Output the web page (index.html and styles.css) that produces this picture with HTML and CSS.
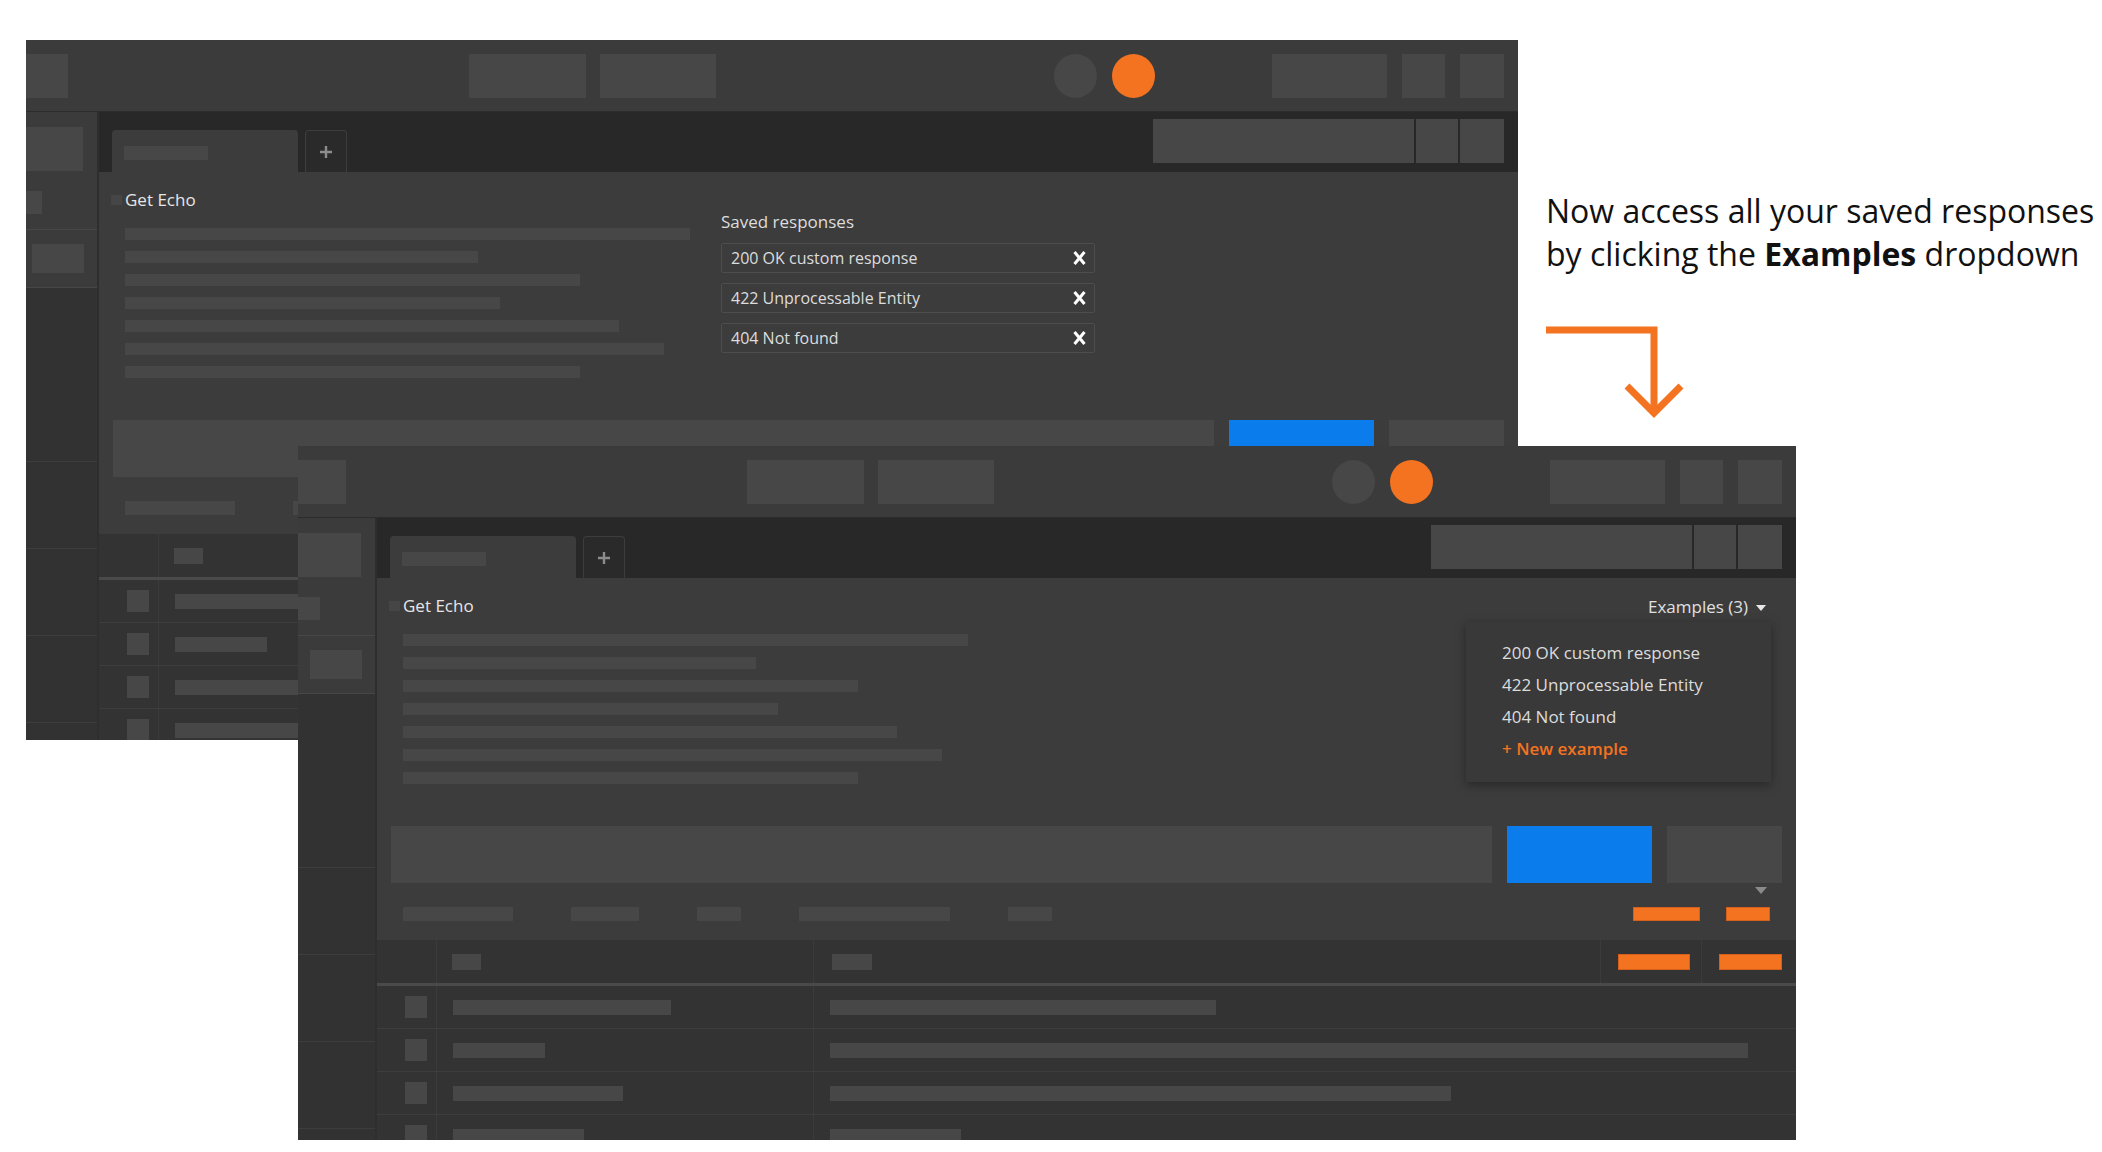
FILE: index.html
```html
<!DOCTYPE html>
<html lang="en">
<head>
  <meta charset="UTF-8" />
  <title>Saved responses - Examples dropdown</title>
  <meta name="viewport" content="width=device-width, initial-scale=1.0" />
  <link rel="stylesheet" href="styles.css">
</head>
<body>
  <div class="canvas">

    <!-- Old view: saved responses listed under the request -->
    <div class="shot shot-back">
      <div class="frame">
        <div class="topbar">
          <div class="ph tb-logo"></div>
          <div class="ph tb-nav1"></div>
          <div class="ph tb-nav2"></div>
          <div class="tb-dot"></div>
          <div class="tb-dot is-orange"></div>
          <div class="tb-right">
            <div class="ph tb-r1"></div>
            <div class="ph tb-r2"></div>
            <div class="ph tb-r3"></div>
          </div>
        </div>

        <aside class="sidebar">
          <div class="sb-top">
            <div class="ph sb-block-a"></div>
            <div class="ph sb-block-b"></div>
            <div class="sb-sep"></div>
            <div class="ph sb-block-c"></div>
          </div>
          <div class="sb-item sb-item-first"></div>
          <div class="sb-item"></div>
          <div class="sb-item"></div>
          <div class="sb-item"></div>
        </aside>

        <div class="main">
          <div class="tabbar">
            <div class="tab"><div class="ph tab-label"></div></div>
            <div class="tab-add">
              <svg width="12" height="12" viewBox="0 0 12 12"><path d="M6 0v12M0 6h12" stroke="#8c8c8c" stroke-width="2.4"/></svg>
            </div>
            <div class="tab-tools">
              <div class="ph tt-env"></div>
              <div class="ph tt-eye"></div>
              <div class="ph tt-gear"></div>
            </div>
          </div>

          <div class="request">
            <div class="doc">
              <div class="doc-title"><span class="doc-mark"></span>Get Echo</div>
              <div class="doc-lines">
                <div class="ph" style="width: 565px"></div>
                <div class="ph" style="width: 353px"></div>
                <div class="ph" style="width: 455px"></div>
                <div class="ph" style="width: 375px"></div>
                <div class="ph" style="width: 494px"></div>
                <div class="ph" style="width: 539px"></div>
                <div class="ph" style="width: 455px"></div>
              </div>
            </div>
            <div class="saved">
              <h3>Saved responses</h3>
              <div class="saved-list">
                <div class="saved-item">200 OK custom response
                  <svg class="x-icon" width="13" height="14" viewBox="0 0 13 14"><path d="M1.5 1l10 12M11.5 1l-10 12" stroke="#fff" stroke-width="3"/></svg>
                </div>
                <div class="saved-item">422 Unprocessable Entity
                  <svg class="x-icon" width="13" height="14" viewBox="0 0 13 14"><path d="M1.5 1l10 12M11.5 1l-10 12" stroke="#fff" stroke-width="3"/></svg>
                </div>
                <div class="saved-item">404 Not found
                  <svg class="x-icon" width="13" height="14" viewBox="0 0 13 14"><path d="M1.5 1l10 12M11.5 1l-10 12" stroke="#fff" stroke-width="3"/></svg>
                </div>
              </div>
            </div>
          </div>

          <div class="urlbar">
            <div class="ph url-input"></div>
            <div class="url-send"></div>
            <div class="ph url-save"></div>
          </div>

          <div class="params">
            <div class="caret"></div>
            <div class="param-row">
              <div class="ph" style="width: 110px"></div>
              <div class="ph" style="width: 68px"></div>
              <div class="ph" style="width: 44px"></div>
              <div class="ph" style="width: 151px"></div>
              <div class="ph" style="width: 44px"></div>
              <div class="param-links">
                <div class="hl" style="width: 67px"></div>
                <div class="hl" style="width: 44px"></div>
              </div>
            </div>
          </div>

          <div class="table">
            <div class="thead">
              <div></div>
              <div><span class="ph th-bar" style="width: 29px"></span></div>
              <div class="th-wide"><span class="ph th-bar" style="width: 40px"></span></div>
              <div class="th-link"><span class="hl th-bar" style="width: 72px"></span></div>
              <div class="th-link"><span class="hl th-bar" style="width: 63px"></span></div>
            </div>
            <div class="trow">
              <div class="c0"><span class="ph check"></span></div>
              <div><span class="ph cell-bar" style="width: 218px"></span></div>
              <div><span class="ph cell-bar" style="width: 386px"></span></div>
            </div>
            <div class="trow">
              <div class="c0"><span class="ph check"></span></div>
              <div><span class="ph cell-bar" style="width: 92px"></span></div>
              <div><span class="ph cell-bar" style="width: 918px"></span></div>
            </div>
            <div class="trow">
              <div class="c0"><span class="ph check"></span></div>
              <div><span class="ph cell-bar" style="width: 170px"></span></div>
              <div><span class="ph cell-bar" style="width: 621px"></span></div>
            </div>
            <div class="trow">
              <div class="c0"><span class="ph check"></span></div>
              <div><span class="ph cell-bar" style="width: 131px"></span></div>
              <div><span class="ph cell-bar" style="width: 131px"></span></div>
            </div>
          </div>
        </div>
      </div>
    </div>

    <!-- New view: Examples dropdown -->
    <div class="shot shot-front">
      <div class="frame">
        <div class="topbar">
          <div class="ph tb-logo"></div>
          <div class="ph tb-nav1"></div>
          <div class="ph tb-nav2"></div>
          <div class="tb-dot"></div>
          <div class="tb-dot is-orange"></div>
          <div class="tb-right">
            <div class="ph tb-r1"></div>
            <div class="ph tb-r2"></div>
            <div class="ph tb-r3"></div>
          </div>
        </div>

        <aside class="sidebar">
          <div class="sb-top">
            <div class="ph sb-block-a"></div>
            <div class="ph sb-block-b"></div>
            <div class="sb-sep"></div>
            <div class="ph sb-block-c"></div>
          </div>
          <div class="sb-item sb-item-first"></div>
          <div class="sb-item"></div>
          <div class="sb-item"></div>
          <div class="sb-item"></div>
        </aside>

        <div class="main">
          <div class="tabbar">
            <div class="tab"><div class="ph tab-label"></div></div>
            <div class="tab-add">
              <svg width="12" height="12" viewBox="0 0 12 12"><path d="M6 0v12M0 6h12" stroke="#8c8c8c" stroke-width="2.4"/></svg>
            </div>
            <div class="tab-tools">
              <div class="ph tt-env"></div>
              <div class="ph tt-eye"></div>
              <div class="ph tt-gear"></div>
            </div>
          </div>

          <div class="request">
            <div class="doc">
              <div class="doc-title"><span class="doc-mark"></span>Get Echo</div>
              <div class="doc-lines">
                <div class="ph" style="width: 565px"></div>
                <div class="ph" style="width: 353px"></div>
                <div class="ph" style="width: 455px"></div>
                <div class="ph" style="width: 375px"></div>
                <div class="ph" style="width: 494px"></div>
                <div class="ph" style="width: 539px"></div>
                <div class="ph" style="width: 455px"></div>
              </div>
            </div>
            <div class="examples">
              Examples (3)
              <span class="examples-caret"></span>
            </div>
            <ul class="menu">
              <li>200 OK custom response</li>
              <li>422 Unprocessable Entity</li>
              <li>404 Not found</li>
              <li class="menu-new">+ New example</li>
            </ul>
          </div>

          <div class="urlbar">
            <div class="ph url-input"></div>
            <div class="url-send"></div>
            <div class="ph url-save"></div>
          </div>

          <div class="params">
            <div class="caret"></div>
            <div class="param-row">
              <div class="ph" style="width: 110px"></div>
              <div class="ph" style="width: 68px"></div>
              <div class="ph" style="width: 44px"></div>
              <div class="ph" style="width: 151px"></div>
              <div class="ph" style="width: 44px"></div>
              <div class="param-links">
                <div class="hl" style="width: 67px"></div>
                <div class="hl" style="width: 44px"></div>
              </div>
            </div>
          </div>

          <div class="table">
            <div class="thead">
              <div></div>
              <div><span class="ph th-bar" style="width: 29px"></span></div>
              <div class="th-wide"><span class="ph th-bar" style="width: 40px"></span></div>
              <div class="th-link"><span class="hl th-bar" style="width: 72px"></span></div>
              <div class="th-link"><span class="hl th-bar" style="width: 63px"></span></div>
            </div>
            <div class="trow">
              <div class="c0"><span class="ph check"></span></div>
              <div><span class="ph cell-bar" style="width: 218px"></span></div>
              <div><span class="ph cell-bar" style="width: 386px"></span></div>
            </div>
            <div class="trow">
              <div class="c0"><span class="ph check"></span></div>
              <div><span class="ph cell-bar" style="width: 92px"></span></div>
              <div><span class="ph cell-bar" style="width: 918px"></span></div>
            </div>
            <div class="trow">
              <div class="c0"><span class="ph check"></span></div>
              <div><span class="ph cell-bar" style="width: 170px"></span></div>
              <div><span class="ph cell-bar" style="width: 621px"></span></div>
            </div>
            <div class="trow">
              <div class="c0"><span class="ph check"></span></div>
              <div><span class="ph cell-bar" style="width: 131px"></span></div>
              <div><span class="ph cell-bar" style="width: 131px"></span></div>
            </div>
          </div>
        </div>
      </div>
    </div>

    <!-- Caption and arrow -->
    <p class="note">Now access all your saved responses<br>by clicking the <b>Examples</b> dropdown</p>
    <svg class="arrow" width="150" height="110" viewBox="0 0 150 110">
      <polyline points="6,10 114,10 114,92" fill="none" stroke="#f47321" stroke-width="7" stroke-linejoin="miter"/>
      <polyline points="87,66 114,93 141,66" fill="none" stroke="#f47321" stroke-width="7" stroke-linejoin="miter"/>
    </svg>

  </div>
</body>
</html>
```

FILE: styles.css
```css
* {
  margin: 0;
  padding: 0;
  box-sizing: border-box;
}

body {
  background-color: #fff;
  font-family: 'Open Sans', 'Noto Sans', sans-serif;
  width: 2102px;
  height: 1152px;
  overflow: hidden;
}

.canvas {
  position: relative;
  width: 2102px;
  height: 1152px;
}

/* placeholder blocks */
.ph {
  background-color: #474747;
}

.hl {
  background-color: #f47321;
  box-shadow: inset 0 0 0 1px #d65f1a;
  height: 14px;
}

/* screenshots on the canvas */
.shot {
  position: absolute;
  overflow: hidden;
  background-color: #333;
}

.shot-back {
  left: 26px;
  top: 40px;
  width: 1492px;
  height: 700px;
}

.shot-front {
  left: 298px;
  top: 446px;
  width: 1498px;
  height: 694px;
}

.frame {
  width: 1511px;
  height: 100%;
  display: grid;
  grid-template-columns: 90px 1fr;
  grid-template-rows: 72px 1fr;
}

.shot-back .frame {
  margin-left: -19px;
}

.shot-front .frame {
  margin-left: -13px;
}

/* top bar */
.topbar {
  grid-column: 1 / 3;
  display: flex;
  align-items: center;
  padding-right: 14px;
  background-color: #3b3b3b;
  border-bottom: 1px solid #2c2c2c;
}

.topbar .ph {
  height: 44px;
}

.tb-logo { width: 61px; }
.tb-nav1 { width: 117px; margin-left: 401px; }
.tb-nav2 { width: 116px; margin-left: 14px; }

.tb-dot {
  width: 43px;
  height: 44px;
  border-radius: 50%;
  background-color: #474747;
  margin-left: 338px;
}

.tb-dot.is-orange {
  background-color: #f47321;
  margin-left: 15px;
}

.tb-right {
  margin-left: auto;
  display: flex;
  gap: 15px;
}

.tb-r1 { width: 115px; }
.tb-r2 { width: 43px; }
.tb-r3 { width: 44px; }

/* sidebar */
.sidebar {
  display: flex;
  flex-direction: column;
  background-color: #323232;
  overflow: hidden;
}

.sb-top {
  height: 176px;
  padding-top: 15px;
  background-color: #3b3b3b;
  border-bottom: 1px solid #474747;
  display: flex;
  flex-direction: column;
}

.sb-block-a { width: 76px; height: 44px; }
.sb-block-b { width: 35px; height: 23px; margin-top: 20px; }

.sb-sep {
  height: 1px;
  margin-top: 15px;
  background-color: #474747;
}

.sb-block-c { width: 52px; height: 29px; margin: 14px 0 0 25px; }

.sb-item {
  height: 87px;
  flex: none;
  border-bottom: 1px solid #3d3d3d;
}

.sb-item-first {
  height: 174px;
}

/* main column */
.main {
  display: flex;
  flex-direction: column;
  min-width: 0;
  background-color: #333;
  border-left: 2px solid #2e2e2e;
}

.tabbar {
  height: 60px;
  flex: none;
  display: flex;
  align-items: flex-end;
  padding: 0 14px 0 13px;
  background-color: #282828;
}

.tab {
  width: 186px;
  height: 42px;
  padding: 16px 0 0 12px;
  background-color: #3c3c3c;
  border-radius: 4px 4px 0 0;
}

.tab-label {
  width: 84px;
  height: 14px;
}

.tab-add {
  width: 42px;
  height: 42px;
  margin-left: 7px;
  display: flex;
  align-items: center;
  justify-content: center;
  background-color: #2a2a2a;
  border: 1px solid #3d3d3d;
  border-bottom: none;
  border-radius: 4px 4px 0 0;
}

.tab-tools {
  margin-left: auto;
  align-self: flex-start;
  margin-top: 7px;
  display: flex;
  gap: 2px;
}

.tab-tools .ph { height: 44px; }
.tt-env { width: 261px; }
.tt-eye { width: 42px; }
.tt-gear { width: 44px; }

/* request docs */
.request {
  position: relative;
  height: 248px;
  flex: none;
  display: flex;
  background-color: #3c3c3c;
}

.doc {
  width: 622px;
  flex: none;
  padding: 16px 0 0 12px;
}

.doc-title {
  display: flex;
  align-items: center;
  font-size: 17px;
  line-height: 24px;
  color: #e6e6e6;
}

.doc-mark {
  width: 11px;
  height: 10px;
  margin-right: 3px;
  background-color: #464646;
}

.doc-lines {
  margin-top: 16px;
  padding-left: 14px;
  display: flex;
  flex-direction: column;
  gap: 11px;
}

.doc-lines .ph {
  height: 12px;
}

.saved {
  padding-top: 38px;
}

.saved h3 {
  font-size: 17px;
  font-weight: 400;
  line-height: 24px;
  color: #ddd;
}

.saved-list {
  margin-top: 9px;
  width: 374px;
  display: flex;
  flex-direction: column;
  gap: 10px;
}

.saved-item {
  height: 30px;
  padding: 0 8px 0 9px;
  display: flex;
  align-items: center;
  justify-content: space-between;
  border: 1px solid #4d4d4d;
  border-radius: 2px;
  font-size: 16px;
  color: #ddd;
}

/* examples dropdown */
.examples {
  margin-left: auto;
  padding: 17px 30px 0 0;
  display: flex;
  align-items: flex-start;
  gap: 8px;
  font-size: 17px;
  line-height: 24px;
  color: #e0e0e0;
}

.examples-caret {
  margin-top: 10px;
  border-left: 5px solid transparent;
  border-right: 5px solid transparent;
  border-top: 6px solid #e8e8e8;
}

.menu {
  position: absolute;
  top: 44px;
  right: 25px;
  width: 305px;
  height: 160px;
  padding: 15px 0 0 36px;
  list-style: none;
  background-color: #393939;
  box-shadow: 0 3px 10px rgba(0, 0, 0, 0.35);
}

.menu li {
  font-size: 17px;
  line-height: 32px;
  color: #dcdcdc;
}

.menu li.menu-new {
  color: #f47321;
  font-weight: 600;
}

/* url bar */
.urlbar {
  height: 57px;
  flex: none;
  display: flex;
  gap: 15px;
  padding: 0 14px;
  background-color: #3c3c3c;
}

.url-input { flex: 1; }

.url-send {
  width: 145px;
  background-color: #0a7cec;
}

.url-save { width: 115px; }

/* params strip */
.params {
  height: 57px;
  flex: none;
  display: flex;
  flex-direction: column;
  padding: 4px 29px 0 26px;
  background-color: #3c3c3c;
}

.caret {
  align-self: flex-end;
  border-left: 6px solid transparent;
  border-right: 6px solid transparent;
  border-top: 7px solid #8a8a8a;
}

.param-row {
  margin: 13px -3px 0 0;
  display: flex;
  gap: 58px;
}

.param-row .ph {
  height: 14px;
}

.param-links {
  margin-left: auto;
  display: flex;
  gap: 26px;
}

/* table */
.table {
  flex: 1;
  background-color: #333;
}

.thead {
  height: 46px;
  display: grid;
  grid-template-columns: 60px 377px 787px 101px 1fr;
  border-bottom: 3px solid #4a4a4a;
}

.thead > div {
  display: flex;
  align-items: center;
  padding-left: 15px;
  border-right: 1px solid #3b3b3b;
}

.thead > div:last-child {
  border-right: none;
}

.thead .th-wide { padding-left: 18px; }
.thead .th-link { padding-left: 17px; }

.th-bar {
  height: 16px;
}

.trow {
  height: 43px;
  display: grid;
  grid-template-columns: 60px 377px 1fr;
  border-bottom: 1px solid #3d3d3d;
}

.trow > div {
  display: flex;
  align-items: center;
  padding-left: 16px;
  border-right: 1px solid #3b3b3b;
}

.trow > div:last-child {
  border-right: none;
}

.trow .c0 {
  padding-left: 28px;
}

.check {
  width: 22px;
  height: 22px;
}

.cell-bar {
  height: 15px;
}

/* caption */
.note {
  position: absolute;
  left: 1546px;
  top: 189px;
  font-size: 32px;
  line-height: 43px;
  color: #111;
  white-space: nowrap;
}

.note b {
  font-weight: 700;
}

.arrow {
  position: absolute;
  left: 1540px;
  top: 320px;
}
```
